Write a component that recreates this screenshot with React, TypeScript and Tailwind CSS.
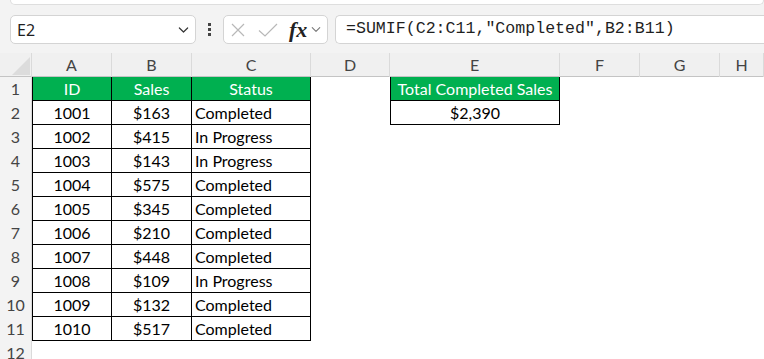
import React from "react";

const rows: [string, string, string][] = [
  ["1001", "$163", "Completed"],
  ["1002", "$415", "In Progress"],
  ["1003", "$143", "In Progress"],
  ["1004", "$575", "Completed"],
  ["1005", "$345", "Completed"],
  ["1006", "$210", "Completed"],
  ["1007", "$448", "Completed"],
  ["1008", "$109", "In Progress"],
  ["1009", "$132", "Completed"],
  ["1010", "$517", "Completed"],
];

const cols = "grid grid-cols-[32px_80px_80px_119px_79px_170px_80px_80px_1fr] grid-rows-[24px]";

function Chevron({ className }: { className?: string }) {
  return (
    <svg viewBox="0 0 12 8" className={className} fill="none" stroke="currentColor" strokeWidth="1.3" strokeLinecap="round" strokeLinejoin="round">
      <path d="M1.5 1.8 6 6.2l4.5-4.4" />
    </svg>
  );
}

export default function App() {
  return (
    <div className="w-[764px] h-[359px] overflow-hidden bg-[#f3f3f3] flex flex-col" style={{ fontFamily: "Lato, 'Noto Sans', sans-serif" }}>
      {/* top ribbon remnant */}
      <div className="ml-[10px] h-[5px] bg-white rounded-b-[6px] border border-t-0 border-[#dedede] shrink-0" />
      {/* formula bar */}
      <div className="mt-[10px] h-[29px] flex items-stretch shrink-0">
        <div className="ml-[10px] w-[186px] bg-white border border-[#d4d4d4] rounded-[5px] flex items-center justify-between pl-[6px] pr-[6px]">
          <span className="text-[16px] text-[#1f1f1f]" style={{ fontFamily: "'Noto Sans', sans-serif" }}>E2</span>
          <Chevron className="w-[11px] h-[8px] text-[#333]" />
        </div>
        <div className="w-[27px] flex flex-col items-center justify-center gap-[2px]">
          <div className="w-[3px] h-[3px] bg-[#444]" />
          <div className="w-[3px] h-[3px] bg-[#444]" />
          <div className="w-[3px] h-[3px] bg-[#444]" />
        </div>
        <div className="w-[105px] bg-white border border-[#d4d4d4] rounded-[5px] flex items-center pl-[6px]">
          <svg viewBox="0 0 16 16" className="w-[16px] h-[16px] text-[#b8b8b8]" fill="none" stroke="currentColor" strokeWidth="1.2">
            <path d="M2 2l12 12M14 2 2 14" />
          </svg>
          <svg viewBox="0 0 20 16" className="ml-[12px] w-[20px] h-[16px] text-[#b8b8b8]" fill="none" stroke="currentColor" strokeWidth="1.2">
            <path d="M1 8.5 7 14 19 2" />
          </svg>
          <span className="ml-[11px] italic text-[22px] leading-none text-[#222] font-semibold" style={{ fontFamily: "'Liberation Serif', serif" }}>fx</span>
          <Chevron className="ml-[4px] w-[10px] h-[7px] text-[#777]" />
        </div>
        <div className="ml-[7px] flex-1 bg-white border border-r-0 border-[#d4d4d4] rounded-l-[5px] flex items-center pl-[10px]">
          <span className="text-[16.6px] text-[#1f1f1f] whitespace-pre" style={{ fontFamily: "'Liberation Mono', monospace" }}>=SUMIF(C2:C11,"Completed",B2:B11)</span>
        </div>
      </div>
      {/* sheet */}
      <div className="mt-[9px] flex-1 flex flex-col text-[16px] leading-[20px]">
        {/* column headers */}
        <div className={`${cols} h-[24px] bg-[#f0f0f0] border-b border-[#c4c4c4] text-[#444]`}>
          <div className="relative border-r border-[#dadada]">
            <svg viewBox="0 0 18 18" className="absolute left-[12px] top-[4px] w-[18px] h-[18px]">
              <path d="M18 0V18H0Z" fill="#dcdcdc" />
            </svg>
          </div>
          {["A", "B", "C", "D", "E", "F", "G", "H"].map((c) => (
            <div key={c} className="border-r border-[#dadada] flex items-center justify-center">{c}</div>
          ))}
        </div>
        {/* row 1 */}
        <div className={`${cols} h-[24px] bg-white`}>
          <div className="bg-[#f3f3f3] border-r border-[#dadada] flex items-center justify-center text-[#444]">1</div>
          <div className="bg-[#00b050] border-l border-r border-b border-black text-white flex items-center justify-center">ID</div>
          <div className="bg-[#00b050] border-r border-b border-black text-white flex items-center justify-center">Sales</div>
          <div className="bg-[#00b050] border-r border-b border-black text-white flex items-center justify-center">Status</div>
          <div />
          <div className="bg-[#00b050] border-l border-r border-b border-black text-white flex items-center justify-center whitespace-nowrap">Total Completed Sales</div>
          <div />
          <div />
          <div />
        </div>
        {rows.map((r, i) => (
          <div key={r[0]} className={`${cols} h-[24px] bg-white text-black`}>
            <div className="bg-[#f3f3f3] border-r border-[#dadada] flex items-center justify-center text-[#444]">{i + 2}</div>
            <div className="border-l border-r border-b border-black flex items-center justify-center">{r[0]}</div>
            <div className="border-r border-b border-black flex items-center justify-center">{r[1]}</div>
            <div className="border-r border-b border-black flex items-center pl-[3px]">{r[2]}</div>
            <div />
            {i === 0 ? (
              <div className="border-l border-r border-b border-black flex items-center justify-center">$2,390</div>
            ) : (
              <div />
            )}
            <div />
            <div />
            <div />
          </div>
        ))}
        <div className={`${cols} h-[24px] bg-white`}>
          <div className="bg-[#f3f3f3] border-r border-[#dadada] flex items-center justify-center text-[#444]">12</div>
        </div>
      </div>
    </div>
  );
}
